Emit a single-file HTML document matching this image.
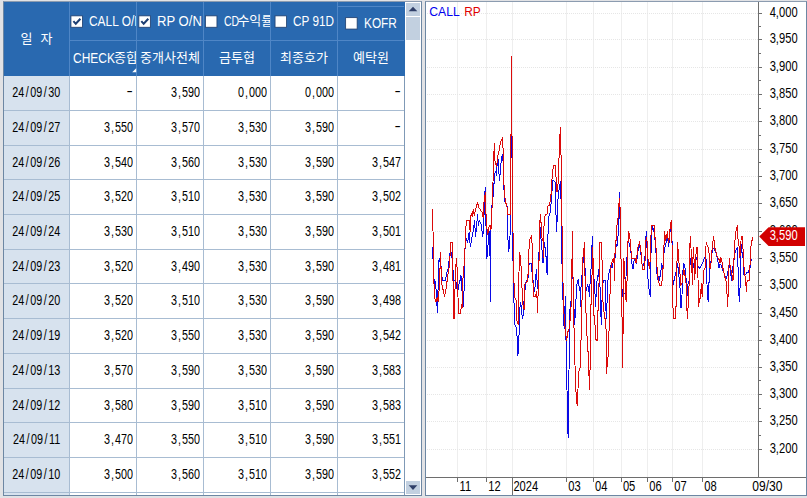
<!DOCTYPE html>
<html lang="ko"><head><meta charset="utf-8"><title>금리</title>
<style>
html,body{margin:0;padding:0}
body{width:807px;height:498px;background:#e1e2e5;position:relative;overflow:hidden;font-family:"Liberation Sans","Noto Sans CJK KR","NanumGothic",sans-serif;font-size:12px;color:#000}
.a{position:absolute}
.pn{position:absolute;border:1px solid #6d87a3;border-top-color:#8c9cb0;background:#fff}
.ht{color:#fff;font-size:13px;line-height:15px;white-space:nowrap}
.hc{overflow:hidden;color:#fff}
.hc>*{position:absolute}
.cb{width:10px;height:10px;border:1px solid #1f3d6b;background:#fff;display:block}
.cb svg{position:absolute;left:-1px;top:-1px}
.lb{white-space:nowrap;font-size:14px;line-height:16px;transform:scaleX(.855);transform-origin:0 50%}
.lk{white-space:nowrap;font-size:13px;line-height:16px}
.sc{text-align:center}
.sc .lb2{position:static;display:block;line-height:16px;margin-top:8.5px;font-size:13px;white-space:nowrap}
.tri{width:0;height:0;border-left:4px solid transparent;border-bottom:4px solid #fff}
.rw{left:0;width:404px;height:18px;line-height:18px;font-size:14.5px;white-space:nowrap}
.rw span{position:absolute;top:0;height:18px}
.rw i{font-style:normal;display:inline-block}
.rw .d{text-align:center}
.rw b{font-weight:normal}
.rw .d i{transform:scaleX(.744)}
.rw .d b{padding:0 2px}
.rw .n b{padding:0 1.3px}
.rw .n{text-align:right}
.rw .n i{transform:scaleX(.744);transform-origin:100% 50%;margin-right:2.7px}
.rw .n i.ds{transform:scaleX(1.3);position:relative;top:-1.3px;margin-right:3.4px}
.sbb{background:#c2d0e0}
.sbb svg{display:block}

</style></head><body>
<div class="pn" style="left:3px;top:1px;width:417px;height:493px"></div>
<div class="a" style="left:4px;top:76px;width:65px;height:419px;background:#d7e2ee"></div>
<div class="a" style="left:4px;top:2px;width:401px;height:74px;background:#2969b0"></div>
<div class="a" style="left:69px;top:2px;width:1px;height:74px;background:#4f86c6"></div>
<div class="a" style="left:136px;top:2px;width:1px;height:74px;background:#4f86c6"></div>
<div class="a" style="left:203px;top:2px;width:1px;height:74px;background:#4f86c6"></div>
<div class="a" style="left:270px;top:2px;width:1px;height:74px;background:#4f86c6"></div>
<div class="a" style="left:337px;top:2px;width:1px;height:74px;background:#4f86c6"></div>
<div class="a" style="left:70px;top:40px;width:334px;height:1px;background:#4f86c6"></div>
<div class="a" style="left:338px;top:6px;width:66px;height:1px;background:#4f86c6"></div>
<div class="a" style="left:69px;top:76px;width:1px;height:419px;background:#a8bcd2"></div>
<div class="a" style="left:136px;top:76px;width:1px;height:419px;background:#a8bcd2"></div>
<div class="a" style="left:203px;top:76px;width:1px;height:419px;background:#a8bcd2"></div>
<div class="a" style="left:270px;top:76px;width:1px;height:419px;background:#a8bcd2"></div>
<div class="a" style="left:337px;top:76px;width:1px;height:419px;background:#a8bcd2"></div>
<div class="a" style="left:404px;top:76px;width:1px;height:419px;background:#7f99b6"></div>
<div class="a" style="left:4px;top:110px;width:400px;height:1px;background:#a8bcd2"></div>
<div class="a" style="left:4px;top:145px;width:400px;height:1px;background:#a8bcd2"></div>
<div class="a" style="left:4px;top:179px;width:400px;height:1px;background:#a8bcd2"></div>
<div class="a" style="left:4px;top:214px;width:400px;height:1px;background:#a8bcd2"></div>
<div class="a" style="left:4px;top:249px;width:400px;height:1px;background:#a8bcd2"></div>
<div class="a" style="left:4px;top:283px;width:400px;height:1px;background:#a8bcd2"></div>
<div class="a" style="left:4px;top:318px;width:400px;height:1px;background:#a8bcd2"></div>
<div class="a" style="left:4px;top:353px;width:400px;height:1px;background:#a8bcd2"></div>
<div class="a" style="left:4px;top:388px;width:400px;height:1px;background:#a8bcd2"></div>
<div class="a" style="left:4px;top:422px;width:400px;height:1px;background:#a8bcd2"></div>
<div class="a" style="left:4px;top:457px;width:400px;height:1px;background:#a8bcd2"></div>
<div class="a" style="left:4px;top:492px;width:400px;height:1px;background:#a8bcd2"></div>
<div class="a ht" style="left:4px;top:31px;width:65px;text-align:center"><span style="letter-spacing:8px;margin-right:-8px">일자</span></div>
<div class="a hc" style="left:70px;top:2px;width:66px;height:38px"><span class="lb" style="left:19.2px;top:10.9px;transform:scaleX(0.850)">CALL O/N</span></div>
<div class="a hc" style="left:137px;top:2px;width:66px;height:38px"><span class="lb" style="left:20.1px;top:10.9px;transform:scaleX(0.935)">RP O/N</span></div>
<div class="a hc" style="left:204px;top:2px;width:66px;height:38px"><span class="lb" style="left:19.7px;top:10.9px;transform:scaleX(.75)">CD</span><span class="lk" style="left:33.4px;top:10.9px">수익률</span></div>
<div class="a hc" style="left:271px;top:2px;width:66px;height:38px"><span class="lb" style="left:22.3px;top:10.9px;transform:scaleX(0.840)">CP 91D</span></div>
<div class="a hc" style="left:338px;top:2px;width:66px;height:38px"><span class="lb" style="left:25.9px;top:12.7px;transform:scaleX(0.845)">KOFR</span></div>
<div class="a hc" style="left:70px;top:41px;width:66px;height:34px"><span class="lb" style="left:2.6px;top:8.6px">CHECK</span><span class="lk" style="left:44px;top:8.6px">종합</span></div>
<div class="a hc sc" style="left:137px;top:41px;width:66px;height:34px"><span class="lb2">중개사전체</span></div>
<div class="a hc sc" style="left:204px;top:41px;width:66px;height:34px"><span class="lb2">금투협</span></div>
<div class="a hc sc" style="left:271px;top:41px;width:66px;height:34px"><span class="lb2">최종호가</span></div>
<div class="a hc sc" style="left:338px;top:41px;width:66px;height:34px"><span class="lb2">예탁원</span></div>
<svg class="a" style="left:0;top:0" width="425" height="80" viewBox="0 0 425 80"><rect x="70.95" y="15.85" width="11.5" height="11.4" fill="#fff" stroke="#1f3d6b" stroke-width=".8"/><path d="M73.4 21.1 l2.4 2.7 l4.6 -5" fill="none" stroke="#1d3f73" stroke-width="2"/><rect x="138.85" y="15.85" width="11.5" height="11.4" fill="#fff" stroke="#1f3d6b" stroke-width=".8"/><path d="M141.3 21.1 l2.4 2.7 l4.6 -5" fill="none" stroke="#1d3f73" stroke-width="2"/><rect x="205.45" y="15.85" width="11.5" height="11.4" fill="#fff" stroke="#1f3d6b" stroke-width=".8"/><rect x="275.05" y="15.85" width="11.5" height="11.4" fill="#fff" stroke="#1f3d6b" stroke-width=".8"/><rect x="345.65" y="17.65" width="11.5" height="11.4" fill="#fff" stroke="#1f3d6b" stroke-width=".8"/><path d="M132.2 72.2 l4 -4 v4 z" fill="#fff"/></svg>
<div class="a rw" style="top:83.16px"><span class="d" style="left:4px;width:65px"><i>24<b>/</b>09<b>/</b>30</i></span><span class="n" style="left:69px;width:67px"><i class="ds">-</i></span><span class="n" style="left:136px;width:67px"><i>3<b>,</b>590</i></span><span class="n" style="left:203px;width:67px"><i>0<b>,</b>000</i></span><span class="n" style="left:270px;width:67px"><i>0<b>,</b>000</i></span><span class="n" style="left:337px;width:67px"><i class="ds">-</i></span></div>
<div class="a rw" style="top:117.86px"><span class="d" style="left:4px;width:65px"><i>24<b>/</b>09<b>/</b>27</i></span><span class="n" style="left:69px;width:67px"><i>3<b>,</b>550</i></span><span class="n" style="left:136px;width:67px"><i>3<b>,</b>570</i></span><span class="n" style="left:203px;width:67px"><i>3<b>,</b>530</i></span><span class="n" style="left:270px;width:67px"><i>3<b>,</b>590</i></span><span class="n" style="left:337px;width:67px"><i class="ds">-</i></span></div>
<div class="a rw" style="top:152.57px"><span class="d" style="left:4px;width:65px"><i>24<b>/</b>09<b>/</b>26</i></span><span class="n" style="left:69px;width:67px"><i>3<b>,</b>540</i></span><span class="n" style="left:136px;width:67px"><i>3<b>,</b>560</i></span><span class="n" style="left:203px;width:67px"><i>3<b>,</b>530</i></span><span class="n" style="left:270px;width:67px"><i>3<b>,</b>590</i></span><span class="n" style="left:337px;width:67px"><i>3<b>,</b>547</i></span></div>
<div class="a rw" style="top:187.28px"><span class="d" style="left:4px;width:65px"><i>24<b>/</b>09<b>/</b>25</i></span><span class="n" style="left:69px;width:67px"><i>3<b>,</b>520</i></span><span class="n" style="left:136px;width:67px"><i>3<b>,</b>510</i></span><span class="n" style="left:203px;width:67px"><i>3<b>,</b>530</i></span><span class="n" style="left:270px;width:67px"><i>3<b>,</b>590</i></span><span class="n" style="left:337px;width:67px"><i>3<b>,</b>502</i></span></div>
<div class="a rw" style="top:222.00px"><span class="d" style="left:4px;width:65px"><i>24<b>/</b>09<b>/</b>24</i></span><span class="n" style="left:69px;width:67px"><i>3<b>,</b>530</i></span><span class="n" style="left:136px;width:67px"><i>3<b>,</b>510</i></span><span class="n" style="left:203px;width:67px"><i>3<b>,</b>530</i></span><span class="n" style="left:270px;width:67px"><i>3<b>,</b>590</i></span><span class="n" style="left:337px;width:67px"><i>3<b>,</b>501</i></span></div>
<div class="a rw" style="top:256.71px"><span class="d" style="left:4px;width:65px"><i>24<b>/</b>09<b>/</b>23</i></span><span class="n" style="left:69px;width:67px"><i>3<b>,</b>520</i></span><span class="n" style="left:136px;width:67px"><i>3<b>,</b>490</i></span><span class="n" style="left:203px;width:67px"><i>3<b>,</b>530</i></span><span class="n" style="left:270px;width:67px"><i>3<b>,</b>590</i></span><span class="n" style="left:337px;width:67px"><i>3<b>,</b>481</i></span></div>
<div class="a rw" style="top:291.42px"><span class="d" style="left:4px;width:65px"><i>24<b>/</b>09<b>/</b>20</i></span><span class="n" style="left:69px;width:67px"><i>3<b>,</b>520</i></span><span class="n" style="left:136px;width:67px"><i>3<b>,</b>510</i></span><span class="n" style="left:203px;width:67px"><i>3<b>,</b>530</i></span><span class="n" style="left:270px;width:67px"><i>3<b>,</b>590</i></span><span class="n" style="left:337px;width:67px"><i>3<b>,</b>498</i></span></div>
<div class="a rw" style="top:326.13px"><span class="d" style="left:4px;width:65px"><i>24<b>/</b>09<b>/</b>19</i></span><span class="n" style="left:69px;width:67px"><i>3<b>,</b>520</i></span><span class="n" style="left:136px;width:67px"><i>3<b>,</b>550</i></span><span class="n" style="left:203px;width:67px"><i>3<b>,</b>530</i></span><span class="n" style="left:270px;width:67px"><i>3<b>,</b>590</i></span><span class="n" style="left:337px;width:67px"><i>3<b>,</b>542</i></span></div>
<div class="a rw" style="top:360.84px"><span class="d" style="left:4px;width:65px"><i>24<b>/</b>09<b>/</b>13</i></span><span class="n" style="left:69px;width:67px"><i>3<b>,</b>570</i></span><span class="n" style="left:136px;width:67px"><i>3<b>,</b>590</i></span><span class="n" style="left:203px;width:67px"><i>3<b>,</b>530</i></span><span class="n" style="left:270px;width:67px"><i>3<b>,</b>590</i></span><span class="n" style="left:337px;width:67px"><i>3<b>,</b>583</i></span></div>
<div class="a rw" style="top:395.55px"><span class="d" style="left:4px;width:65px"><i>24<b>/</b>09<b>/</b>12</i></span><span class="n" style="left:69px;width:67px"><i>3<b>,</b>580</i></span><span class="n" style="left:136px;width:67px"><i>3<b>,</b>590</i></span><span class="n" style="left:203px;width:67px"><i>3<b>,</b>510</i></span><span class="n" style="left:270px;width:67px"><i>3<b>,</b>590</i></span><span class="n" style="left:337px;width:67px"><i>3<b>,</b>583</i></span></div>
<div class="a rw" style="top:430.26px"><span class="d" style="left:4px;width:65px"><i>24<b>/</b>09<b>/</b>11</i></span><span class="n" style="left:69px;width:67px"><i>3<b>,</b>470</i></span><span class="n" style="left:136px;width:67px"><i>3<b>,</b>550</i></span><span class="n" style="left:203px;width:67px"><i>3<b>,</b>510</i></span><span class="n" style="left:270px;width:67px"><i>3<b>,</b>590</i></span><span class="n" style="left:337px;width:67px"><i>3<b>,</b>551</i></span></div>
<div class="a rw" style="top:464.97px"><span class="d" style="left:4px;width:65px"><i>24<b>/</b>09<b>/</b>10</i></span><span class="n" style="left:69px;width:67px"><i>3<b>,</b>500</i></span><span class="n" style="left:136px;width:67px"><i>3<b>,</b>560</i></span><span class="n" style="left:203px;width:67px"><i>3<b>,</b>510</i></span><span class="n" style="left:270px;width:67px"><i>3<b>,</b>590</i></span><span class="n" style="left:337px;width:67px"><i>3<b>,</b>552</i></span></div>
<div class="a" style="left:405px;top:2px;width:16px;height:493px;background:#fff"></div>
<div class="a sbb" style="left:406px;top:3px;width:14px;height:13px"><svg width="14" height="13"><path d="M2.7 8.2 L7 3.8 L11.3 8.2 Z" fill="#2f3f68"/></svg></div>
<div class="a sbb" style="left:406px;top:17px;width:14px;height:23px"></div>
<div class="a sbb" style="left:406px;top:481px;width:14px;height:13px"><svg width="14" height="13"><path d="M2.7 4.3 L7 9 L11.3 4.3 Z" fill="#2f3f68"/></svg></div>
<div class="pn" style="left:425px;top:1px;width:380px;height:493px"></div>
<svg class="a" style="left:0;top:0" width="807" height="498" viewBox="0 0 807 498" font-family="'Liberation Sans','Noto Sans CJK KR',sans-serif">
<g stroke="#eeeeee" stroke-width="1" shape-rendering="crispEdges">
<line x1="457.5" y1="2" x2="457.5" y2="477"/>
<line x1="486.5" y1="2" x2="486.5" y2="477"/>
<line x1="512.5" y1="2" x2="512.5" y2="477"/>
<line x1="566.5" y1="2" x2="566.5" y2="477"/>
<line x1="593.5" y1="2" x2="593.5" y2="477"/>
<line x1="621.5" y1="2" x2="621.5" y2="477"/>
<line x1="647.5" y1="2" x2="647.5" y2="477"/>
<line x1="672.5" y1="2" x2="672.5" y2="477"/>
<line x1="702.5" y1="2" x2="702.5" y2="477"/>
</g>
<g stroke="#e6e6e6" stroke-width="1" stroke-dasharray="1 1" shape-rendering="crispEdges">
<line x1="427" y1="13.5" x2="758" y2="13.5"/>
<line x1="427" y1="39.5" x2="758" y2="39.5"/>
<line x1="427" y1="67.5" x2="758" y2="67.5"/>
<line x1="427" y1="94.5" x2="758" y2="94.5"/>
<line x1="427" y1="121.5" x2="758" y2="121.5"/>
<line x1="427" y1="149.5" x2="758" y2="149.5"/>
<line x1="427" y1="176.5" x2="758" y2="176.5"/>
<line x1="427" y1="203.5" x2="758" y2="203.5"/>
<line x1="427" y1="231.5" x2="758" y2="231.5"/>
<line x1="427" y1="258.5" x2="758" y2="258.5"/>
<line x1="427" y1="285.5" x2="758" y2="285.5"/>
<line x1="427" y1="313.5" x2="758" y2="313.5"/>
<line x1="427" y1="340.5" x2="758" y2="340.5"/>
<line x1="427" y1="367.5" x2="758" y2="367.5"/>
<line x1="427" y1="394.5" x2="758" y2="394.5"/>
<line x1="427" y1="421.5" x2="758" y2="421.5"/>
<line x1="427" y1="449.5" x2="758" y2="449.5"/>
</g>
<polyline fill="none" stroke="#0a0ae6" stroke-width="1" stroke-linejoin="miter" shape-rendering="crispEdges" points="432.2,247.0 433.0,259.0 433.7,275.0 434.5,284.0 435.2,282.8 436.1,289.5 436.7,299.2 437.4,313.3 437.9,294.7 438.6,269.4 439.1,258.2 440.9,265.0 442.1,277.6 442.7,280.1 445.3,280.1 446.8,273.2 448.3,268.0 449.8,253.0 451.3,252.3 452.5,262.0 453.1,270.9 454.0,280.6 455.7,280.6 456.5,285.0 457.2,291.0 458.4,288.8 459.0,284.3 460.2,279.8 460.9,274.6 461.7,287.3 462.4,296.2 463.5,307.4 463.9,291.0 464.5,290.3 464.7,262.0 465.0,249.3 465.9,237.4 467.6,242.6 469.1,232.2 470.3,247.0 471.4,240.4 472.8,233.7 473.9,225.5 474.6,220.3 475.5,236.7 476.6,226.3 477.6,213.6 478.3,225.5 479.2,220.3 480.3,222.5 481.5,224.8 482.5,236.7 483.7,229.2 484.4,198.0 485.3,187.0 485.7,220.0 486.2,229.2 486.7,259.0 487.7,251.5 488.5,235.2 489.6,231.5 490.2,267.9 490.4,302.4 490.8,250.0 491.1,218.0 492.5,198.0 493.5,195.4 494.3,176.0 494.5,183.5 495.0,173.0 495.7,171.6 496.5,176.0 497.2,162.7 498.0,159.0 498.7,168.6 499.5,181.2 500.2,173.0 501.0,163.4 501.7,156.7 502.4,154.5 503.2,162.7 503.3,182.7 503.9,188.0 504.6,199.0 505.2,203.5 506.6,204.3 507.5,207.7 507.6,230.0 508.5,252.3 509.3,247.0 510.0,236.7 510.4,215.1 510.5,160.0 511.4,136.0 511.5,154.0 512.3,160.0 512.5,231.5 512.6,259.0 513.4,262.0 513.7,302.1 514.5,305.1 514.9,324.5 516.4,327.4 517.0,336.0 517.9,355.9 518.9,336.0 519.4,330.4 520.0,306.6 520.7,302.1 521.6,311.0 522.4,318.5 523.4,314.0 524.1,299.2 524.9,291.7 525.6,282.8 527.1,279.8 528.3,276.9 528.9,265.0 530.1,263.5 531.3,263.5 531.9,270.9 532.8,275.4 533.4,287.3 534.6,291.7 535.7,278.4 536.3,269.4 536.8,276.9 537.5,285.8 538.3,290.0 538.9,262.0 539.3,228.5 540.2,227.7 540.9,238.1 541.7,242.6 542.2,254.5 543.0,263.4 543.7,239.6 544.6,245.6 545.4,249.3 546.1,257.5 546.7,272.0 547.4,274.6 547.7,250.0 548.3,220.3 549.4,214.4 550.9,211.4 551.1,198.0 552.0,191.0 553.0,179.8 554.0,181.2 555.2,182.0 555.8,207.0 556.5,231.5 557.3,216.6 557.9,201.0 558.5,192.4 559.4,188.0 560.4,181.2 560.9,189.4 561.3,225.5 561.6,259.0 562.6,270.0 563.0,300.0 563.7,322.0 564.3,329.0 565.3,296.5 566.0,340.0 567.0,390.0 568.1,437.8 568.9,380.0 569.5,327.0 570.2,302.0 571.0,301.0 571.6,285.0 572.3,275.0 573.2,280.6 573.9,306.6 574.7,324.5 575.0,318.5 575.9,300.7 576.4,291.7 577.3,280.6 578.4,279.8 578.8,285.8 579.9,288.0 580.6,307.4 581.0,287.0 582.4,270.0 583.4,258.0 584.6,252.0 585.2,275.0 585.8,285.8 586.6,291.0 587.3,285.0 588.0,285.8 588.8,290.3 589.5,296.5 589.8,288.8 590.3,276.9 591.0,269.4 591.8,255.0 592.2,236.4 593.0,262.0 593.7,280.6 594.3,279.8 595.0,294.0 595.5,307.4 596.2,293.2 596.7,286.5 597.4,275.4 598.2,276.1 598.8,269.4 599.2,284.3 599.9,282.8 600.7,311.0 601.4,324.5 601.9,302.1 602.6,288.8 603.2,280.6 605.1,280.6 605.6,299.2 606.3,319.2 607.1,300.7 607.8,281.3 608.9,273.2 609.9,269.4 611.1,265.0 612.1,267.9 613.3,262.0 614.5,263.4 615.5,252.0 616.3,244.1 617.5,245.6 618.2,232.2 618.9,214.0 619.4,192.3 620.0,218.8 620.8,252.3 621.1,262.0 622.0,289.0 623.0,297.0 624.0,294.0 625.0,293.0 626.0,277.0 626.4,267.0 627.9,242.6 628.9,242.3 630.4,248.6 631.2,254.0 631.9,263.4 633.0,269.4 633.4,265.7 634.1,260.5 635.3,259.0 636.4,264.2 637.6,254.0 638.6,245.6 639.8,246.0 641.2,256.0 642.5,268.0 644.3,262.0 644.8,260.5 645.7,239.6 646.5,231.5 646.8,236.7 647.2,257.5 647.8,267.9 648.2,287.3 649.3,289.5 650.2,296.5 650.5,268.0 651.2,247.8 652.2,226.3 653.4,229.2 654.6,235.2 655.2,242.6 656.1,254.5 656.7,262.0 657.2,279.8 658.2,276.9 659.1,280.6 660.1,276.1 660.9,271.7 661.6,263.4 662.7,270.0 663.8,254.5 664.6,250.0 665.3,245.6 666.5,241.1 667.6,237.4 668.6,247.0 669.5,238.1 670.5,226.3 671.8,235.0 672.5,255.0 672.8,285.8 673.5,282.8 675.0,276.1 676.2,270.9 677.2,263.5 678.4,269.4 679.0,276.9 679.9,283.6 680.5,307.4 681.7,307.4 682.0,295.5 682.4,274.6 683.9,263.5 685.0,268.0 685.9,274.6 686.4,289.5 687.6,296.2 688.1,281.3 689.1,282.1 689.6,269.4 690.6,258.0 691.4,262.0 692.1,263.4 693.3,266.4 694.3,261.9 695.8,256.7 696.6,257.5 698.0,266.4 699.5,267.9 701.0,266.4 702.2,263.4 703.2,261.2 704.3,258.2 705.2,257.5 706.2,260.0 707.0,284.3 708.2,302.4 708.8,282.8 709.6,282.1 709.9,263.4 711.4,260.5 712.5,247.8 713.4,248.6 714.4,249.3 715.6,251.5 716.6,256.0 717.4,258.2 718.1,262.5 718.9,268.0 719.9,264.0 721.1,264.9 721.8,267.9 723.3,271.0 724.8,275.4 726.3,278.4 727.5,274.6 728.2,269.4 729.3,264.0 730.5,270.2 731.5,280.6 732.2,270.9 733.7,261.2 734.5,258.0 735.2,251.5 736.4,249.3 737.4,247.0 737.9,262.0 738.5,286.5 739.4,302.4 740.1,285.8 740.4,262.0 740.7,242.6 741.5,247.0 742.4,257.5 743.4,248.6 743.6,266.5 743.8,274.6 745.3,274.6 747.1,272.4 748.3,272.4 749.3,268.7 750.4,267.0 750.8,261.9 751.6,259.0"/>
<polyline fill="none" stroke="#dc0a0a" stroke-width="1" stroke-linejoin="miter" shape-rendering="crispEdges" points="432.2,209.2 433.0,231.0 433.7,262.0 433.7,275.4 434.5,297.7 436.1,301.9 437.2,297.0 438.3,302.4 439.1,289.5 440.1,266.5 440.4,252.3 440.9,263.5 441.6,282.8 443.5,291.7 444.6,296.5 446.1,288.8 447.6,276.9 449.0,268.0 449.8,262.0 450.5,242.3 452.5,242.3 452.6,262.0 452.8,280.6 453.3,281.3 453.5,318.5 454.6,318.5 454.7,302.9 455.4,273.2 456.2,262.0 456.5,258.2 456.8,262.0 457.2,272.4 458.0,297.0 458.4,313.3 460.5,313.3 461.4,305.1 462.4,306.6 463.2,270.2 464.4,263.5 465.9,226.3 466.9,220.3 469.4,220.3 470.2,232.2 471.1,212.9 472.1,216.6 473.3,209.2 474.3,215.8 475.5,209.9 476.6,205.4 477.7,203.2 478.8,207.7 480.3,209.2 481.3,211.4 482.5,212.9 483.2,218.1 484.0,202.5 484.7,198.0 485.3,192.5 485.6,198.0 486.2,220.3 487.0,228.5 487.7,235.2 489.2,226.3 490.2,225.5 491.0,230.0 491.4,220.3 492.5,198.0 493.5,165.6 494.3,143.3 495.0,161.2 496.5,167.1 498.0,155.2 499.5,149.3 500.5,141.8 502.4,138.4 503.2,150.8 503.9,183.5 505.0,198.0 505.2,203.2 506.7,204.0 507.8,214.4 510.2,214.4 510.4,198.0 510.5,135.2 511.5,133.0 511.5,56.0 511.6,135.0 512.4,136.6 512.4,198.0 513.0,231.5 513.4,265.0 514.5,297.0 516.0,300.0 517.0,320.7 518.3,324.5 518.6,288.8 519.0,272.0 519.5,252.3 520.4,257.5 521.2,268.7 521.9,285.8 523.0,305.1 524.1,309.6 524.9,284.3 527.1,281.3 527.4,274.6 528.5,274.6 528.7,257.5 529.3,241.0 531.3,236.4 532.3,245.6 532.6,262.0 532.8,275.4 533.4,296.5 535.3,296.5 536.8,291.0 537.5,313.3 537.8,296.2 538.7,295.5 539.0,262.0 539.3,228.5 540.5,214.4 540.9,222.5 541.7,223.3 542.0,238.1 543.0,241.1 543.4,257.5 544.2,217.3 545.7,214.4 547.6,213.6 547.9,206.2 549.7,204.7 550.4,198.0 551.1,193.9 552.2,176.0 553.4,165.3 555.2,165.3 556.0,176.8 557.0,192.4 557.9,186.5 558.5,174.6 559.4,146.3 560.4,127.0 561.2,163.4 561.5,198.0 561.6,225.5 562.5,226.3 562.8,272.0 563.5,306.4 564.6,322.7 565.6,333.1 566.8,340.6 567.6,332.4 569.0,329.4 570.1,319.7 571.0,307.8 571.6,290.0 572.4,231.5 573.2,290.0 574.5,350.0 575.8,390.0 577.2,405.6 578.0,389.0 578.7,371.4 580.2,367.7 580.4,340.5 581.7,339.0 582.1,290.0 582.7,262.0 583.4,250.8 584.2,247.0 584.6,242.3 584.9,262.0 585.3,312.3 586.5,313.5 587.3,349.5 588.4,352.5 589.4,390.0 590.2,364.0 590.6,305.0 591.6,303.5 592.1,269.4 592.2,247.0 593.3,262.0 593.8,315.4 594.8,316.5 595.4,339.0 597.3,340.6 597.7,310.8 598.8,309.3 599.2,262.0 599.6,242.3 601.7,242.3 601.9,259.0 602.3,262.0 602.6,299.0 603.7,306.6 604.4,318.5 605.9,319.2 606.5,373.7 607.3,364.0 608.2,355.4 608.5,331.6 609.5,330.0 609.8,294.0 610.4,293.2 610.8,269.4 611.1,266.4 612.1,262.0 613.3,258.2 614.1,263.4 614.5,280.6 614.8,257.5 615.6,241.9 616.3,239.6 616.7,227.7 617.5,220.3 618.5,215.8 619.2,198.5 619.7,198.5 620.3,215.8 620.8,251.5 621.1,262.0 621.5,312.6 622.2,318.5 622.6,367.7 623.3,311.0 623.8,258.2 624.6,268.0 625.6,296.0 626.2,302.1 627.2,276.9 627.5,265.0 627.9,244.0 628.5,231.5 629.7,235.2 630.7,248.6 631.9,258.2 635.3,258.2 635.9,263.4 636.8,257.5 637.9,247.0 638.9,244.1 639.6,242.3 640.4,247.0 641.3,254.5 641.9,263.4 642.8,269.4 644.6,269.4 645.3,255.2 645.7,242.6 646.5,236.7 647.2,242.6 647.8,257.5 648.7,265.0 649.8,268.5 650.5,247.0 651.4,225.5 654.6,225.5 654.9,236.7 655.7,242.6 656.7,259.0 657.2,271.7 658.2,278.4 659.4,285.0 661.3,285.0 662.4,279.1 662.9,272.0 663.3,260.5 663.8,250.0 664.6,231.5 665.6,241.1 666.5,236.7 667.6,231.5 668.3,242.6 669.5,238.1 670.2,225.5 671.6,220.3 672.0,242.6 672.5,306.6 673.2,308.1 673.5,318.5 675.4,318.5 675.7,306.6 676.6,305.9 676.9,274.6 677.2,242.3 678.0,249.3 679.0,263.4 679.5,266.5 680.2,276.9 680.9,285.0 682.0,282.8 682.9,275.4 683.9,269.4 685.0,275.4 685.9,279.1 686.4,295.5 687.3,318.5 688.1,306.6 689.1,284.3 689.6,253.8 690.3,236.4 691.1,250.0 691.8,266.4 692.4,285.0 692.8,263.5 693.3,247.0 693.9,256.0 694.8,279.8 695.5,262.0 695.8,256.0 696.6,247.0 697.3,247.0 697.6,262.0 698.0,278.4 698.3,307.4 699.5,299.9 700.6,297.0 701.3,282.8 702.2,297.0 703.0,284.3 703.7,270.2 705.0,268.7 705.5,254.5 706.2,242.3 707.3,245.6 708.5,247.8 709.2,254.5 709.9,268.0 710.8,268.7 711.4,253.0 712.5,247.0 713.4,236.4 714.4,242.6 715.1,249.3 716.2,253.0 717.4,257.5 718.9,259.0 719.9,263.4 720.8,258.2 721.8,260.0 722.6,266.0 723.3,270.2 724.8,276.9 726.0,280.6 727.0,294.0 727.5,307.4 728.2,294.0 728.8,269.4 729.3,258.2 730.0,264.5 730.5,269.4 731.5,270.9 732.2,276.9 733.0,280.6 733.7,266.0 734.5,247.0 735.5,233.7 736.4,228.5 737.4,225.5 737.9,238.1 738.9,242.6 739.4,257.5 740.4,254.5 741.2,236.4 742.7,236.4 743.0,248.6 743.8,265.0 744.9,274.6 745.9,284.3 746.4,291.7 747.1,280.6 749.3,280.6 749.8,269.4 750.1,263.4 750.5,250.0 751.6,242.3 752.8,237.0"/>
<g stroke="#6e6e6e" stroke-width="1" shape-rendering="crispEdges">
<line x1="758.5" y1="2" x2="758.5" y2="478"/>
<line x1="426" y1="477.5" x2="806" y2="477.5"/>
<line x1="759" y1="13.5" x2="762" y2="13.5"/>
<line x1="759" y1="26.5" x2="760.5" y2="26.5"/>
<line x1="759" y1="39.5" x2="762" y2="39.5"/>
<line x1="759" y1="53.5" x2="760.5" y2="53.5"/>
<line x1="759" y1="67.5" x2="762" y2="67.5"/>
<line x1="759" y1="80.5" x2="760.5" y2="80.5"/>
<line x1="759" y1="94.5" x2="762" y2="94.5"/>
<line x1="759" y1="108.5" x2="760.5" y2="108.5"/>
<line x1="759" y1="121.5" x2="762" y2="121.5"/>
<line x1="759" y1="135.5" x2="760.5" y2="135.5"/>
<line x1="759" y1="149.5" x2="762" y2="149.5"/>
<line x1="759" y1="162.5" x2="760.5" y2="162.5"/>
<line x1="759" y1="176.5" x2="762" y2="176.5"/>
<line x1="759" y1="190.5" x2="760.5" y2="190.5"/>
<line x1="759" y1="203.5" x2="762" y2="203.5"/>
<line x1="759" y1="217.5" x2="760.5" y2="217.5"/>
<line x1="759" y1="231.5" x2="762" y2="231.5"/>
<line x1="759" y1="244.5" x2="760.5" y2="244.5"/>
<line x1="759" y1="258.5" x2="762" y2="258.5"/>
<line x1="759" y1="272.5" x2="760.5" y2="272.5"/>
<line x1="759" y1="285.5" x2="762" y2="285.5"/>
<line x1="759" y1="299.5" x2="760.5" y2="299.5"/>
<line x1="759" y1="313.5" x2="762" y2="313.5"/>
<line x1="759" y1="326.5" x2="760.5" y2="326.5"/>
<line x1="759" y1="340.5" x2="762" y2="340.5"/>
<line x1="759" y1="354.5" x2="760.5" y2="354.5"/>
<line x1="759" y1="367.5" x2="762" y2="367.5"/>
<line x1="759" y1="380.5" x2="760.5" y2="380.5"/>
<line x1="759" y1="394.5" x2="762" y2="394.5"/>
<line x1="759" y1="408.5" x2="760.5" y2="408.5"/>
<line x1="759" y1="421.5" x2="762" y2="421.5"/>
<line x1="759" y1="435.5" x2="760.5" y2="435.5"/>
<line x1="759" y1="449.5" x2="762" y2="449.5"/>
<line x1="457.5" y1="478" x2="457.5" y2="482"/>
<line x1="486.5" y1="478" x2="486.5" y2="482"/>
<line x1="512.5" y1="478" x2="512.5" y2="495"/>
<line x1="566.5" y1="478" x2="566.5" y2="482"/>
<line x1="593.5" y1="478" x2="593.5" y2="482"/>
<line x1="621.5" y1="478" x2="621.5" y2="482"/>
<line x1="647.5" y1="478" x2="647.5" y2="482"/>
<line x1="672.5" y1="478" x2="672.5" y2="482"/>
<line x1="702.5" y1="478" x2="702.5" y2="482"/>
</g>
<g font-size="14.5" fill="#000" text-anchor="end">
<text transform="translate(797.6 16.9) scale(.77 1)" x="0" y="0">4,000</text>
<text transform="translate(797.6 42.9) scale(.77 1)" x="0" y="0">3,950</text>
<text transform="translate(797.6 70.9) scale(.77 1)" x="0" y="0">3,900</text>
<text transform="translate(797.6 97.9) scale(.77 1)" x="0" y="0">3,850</text>
<text transform="translate(797.6 124.9) scale(.77 1)" x="0" y="0">3,800</text>
<text transform="translate(797.6 152.9) scale(.77 1)" x="0" y="0">3,750</text>
<text transform="translate(797.6 179.9) scale(.77 1)" x="0" y="0">3,700</text>
<text transform="translate(797.6 206.9) scale(.77 1)" x="0" y="0">3,650</text>
<text transform="translate(797.6 234.9) scale(.77 1)" x="0" y="0">3,600</text>
<text transform="translate(797.6 261.9) scale(.77 1)" x="0" y="0">3,550</text>
<text transform="translate(797.6 288.9) scale(.77 1)" x="0" y="0">3,500</text>
<text transform="translate(797.6 316.9) scale(.77 1)" x="0" y="0">3,450</text>
<text transform="translate(797.6 343.9) scale(.77 1)" x="0" y="0">3,400</text>
<text transform="translate(797.6 370.9) scale(.77 1)" x="0" y="0">3,350</text>
<text transform="translate(797.6 397.9) scale(.77 1)" x="0" y="0">3,300</text>
<text transform="translate(797.6 424.9) scale(.77 1)" x="0" y="0">3,250</text>
<text transform="translate(797.6 452.9) scale(.77 1)" x="0" y="0">3,200</text>
</g>
<path d="M759.2 236.6 L768.6 227.3 L805 227.3 L805 246 L768.6 246 Z" fill="#d20000"/>
<text transform="translate(797.6 240.2) scale(.77 1)" font-size="14.5" fill="#fff" text-anchor="end">3,590</text>
<g font-size="14.5" fill="#000">
<text transform="translate(459.5 490.8) scale(0.770 1)">11</text>
<text transform="translate(488.2 490.8) scale(0.770 1)">12</text>
<text transform="translate(513.4 490.8) scale(0.770 1)">2024</text>
<text transform="translate(568.3 490.8) scale(0.770 1)">03</text>
<text transform="translate(595.0 490.8) scale(0.770 1)">04</text>
<text transform="translate(622.9 490.8) scale(0.770 1)">05</text>
<text transform="translate(649.2 490.8) scale(0.770 1)">06</text>
<text transform="translate(674.2 490.8) scale(0.770 1)">07</text>
<text transform="translate(704.2 490.8) scale(0.770 1)">08</text>
<text transform="translate(752.2 490.8) scale(0.835 1)">09/30</text>
</g>
<text transform="translate(429.3 15.6) scale(.9 1)" font-size="13.5" fill="#0000f0">CALL</text>
<text transform="translate(464.3 15.6) scale(.88 1)" font-size="13.5" fill="#e00000">RP</text>
</svg>
</body></html>
